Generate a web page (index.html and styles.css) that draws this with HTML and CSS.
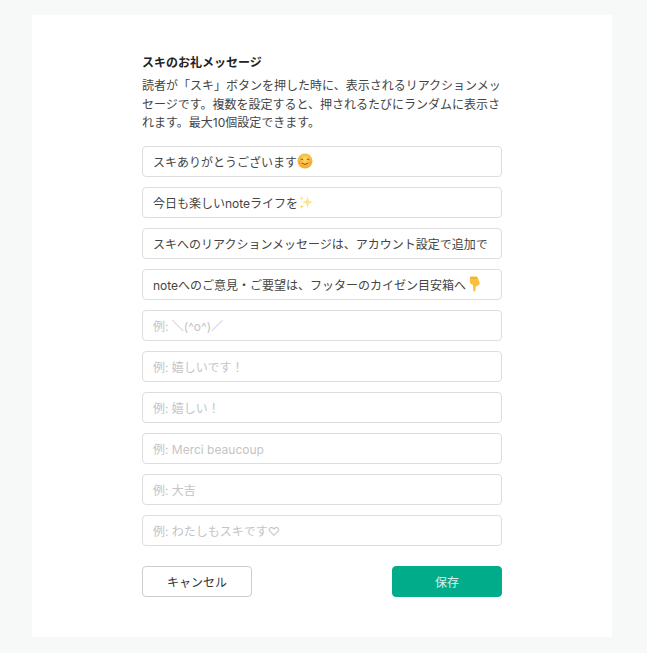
FILE: index.html
```html
<!doctype html>
<html lang="ja">
<head>
  <meta charset="UTF-8">
  <title>スキのお礼メッセージ</title>
  <link rel="stylesheet" href="styles.css">
</head>
<body>
  <main class="card">
    <form class="form">
      <h2 class="form--title">スキのお礼メッセージ</h2>
      <p class="form--desc">読者が「スキ」ボタンを押した時に、表示されるリアクションメッセージです。複数を設定すると、押されるたびにランダムに表示されます。最大10個設定できます。</p>
      <div class="fields">
        <div class="field">スキありがとうございます<svg class="emoji" viewBox="0 0 16 16"><defs><radialGradient id="face" cx="50%" cy="40%" r="60%"><stop offset="0" stop-color="#ffdc66"/><stop offset="1" stop-color="#f5a623"/></radialGradient></defs><circle cx="8" cy="8" r="7.5" fill="url(#face)"/><path d="M3.5 6.800q1.300-1.600 2.700 0M9.800 6.800q1.300-1.600 2.700 0" fill="none" stroke="#7a4a12" stroke-width=".9"/><path d="M4.600 10q3.400 3 6.800 0" fill="none" stroke="#7a4a12" stroke-width=".9"/><circle cx="3.300" cy="9.400" r="1.400" fill="#f7936a" opacity=".55"/><circle cx="12.700" cy="9.400" r="1.400" fill="#f7936a" opacity=".55"/></svg></div>
        <div class="field">今日も楽しいnoteライフを<svg class="emoji" viewBox="0 0 16 16"><path d="M9.500 2.500l1.400 4.300 4.100 1.300-4.100 1.400-1.400 4.500-1.400-4.500-4.100-1.400 4.100-1.300z" fill="#fde58a"/><path d="M3.600 1.500l.7 2 1.900.7-1.900.7-.7 2-.7-2-1.900-.7 1.900-.7z" fill="#fbe9a8"/><path d="M3.600 10.500l.6 1.600 1.600.6-1.600.6-.6 1.700-.6-1.700-1.600-.6 1.600-.6z" fill="#f9d976"/></svg></div>
        <div class="field">スキへのリアクションメッセージは、アカウント設定で追加で</div>
        <div class="field">noteへのご意見・ご要望は、フッターのカイゼン目安箱へ<svg class="emoji" viewBox="0 0 16 16"><path d="M4.800.4h5.400q1 0 1.400 1l2 5.200q.6 1.800-1 2.600l-2.800 1.200-.5 4.100q-.1 1.100-1 1.100t-1-1.100l-.3-5.500-2.800-1.500Q3.900 6.800 3.900 5.700V1.300q0-.9.900-.9z" fill="#fbbf3c"/><path d="M4.300 2h6.800" stroke="#f59f1f" stroke-width=".8"/></svg></div>
        <div class="field field__empty">例: ＼(^o^)／</div>
        <div class="field field__empty">例: 嬉しいです！</div>
        <div class="field field__empty">例: 嬉しい！</div>
        <div class="field field__empty">例: Merci beaucoup</div>
        <div class="field field__empty">例: 大吉</div>
        <div class="field field__empty">例: わたしもスキです♡</div>
      </div>
      <div class="form--controls">
        <button type="button" class="btn">キャンセル</button>
        <button type="submit" class="btn btn__primary">保存</button>
      </div>
    </form>
  </main>
</body>
</html>
```

FILE: styles.css
```css
* {
  box-sizing: border-box;
}

body {
  margin: 0;
  height: 653px;
  padding: 15px 35px 16px 32px;
  overflow: hidden;
  background-color: #f7f9f9;
  color: #222;
  font-family: Inter, "Noto Sans CJK JP", "Noto Sans", sans-serif;
  font-size: 12px;
}

.card {
  background-color: #fff;
  height: 622px;
  padding: 39px 110px 0;
}

.form--title {
  margin: 0 0 5px;
  font-size: 12px;
  line-height: 18px;
  font-weight: 700;
}

.form--desc {
  margin: 0 0 13px;
  line-height: 18.5px;
  color: #444;
}

.fields {
  display: flex;
  flex-direction: column;
  gap: 10px;
}

.field {
  display: flex;
  align-items: center;
  height: 31px;
  padding: 0 10px;
  border: 1px solid #ddd;
  border-radius: 4px;
  white-space: nowrap;
  overflow: hidden;
  color: #444;
}

.field__empty {
  color: #c4c4c4;
}

.emoji {
  flex: none;
  width: 16px;
  height: 16px;
}

.form--controls {
  display: flex;
  justify-content: space-between;
  margin-top: 20px;
}

.btn {
  width: 110px;
  height: 31px;
  padding: 0;
  background-color: #fff;
  border: 1px solid #ccc;
  border-radius: 4px;
  color: #333;
  font: inherit;
  cursor: pointer;
}

.btn__primary {
  background-color: #00ac8a;
  border-color: #00ac8a;
  color: #d9f3ed;
}
```
